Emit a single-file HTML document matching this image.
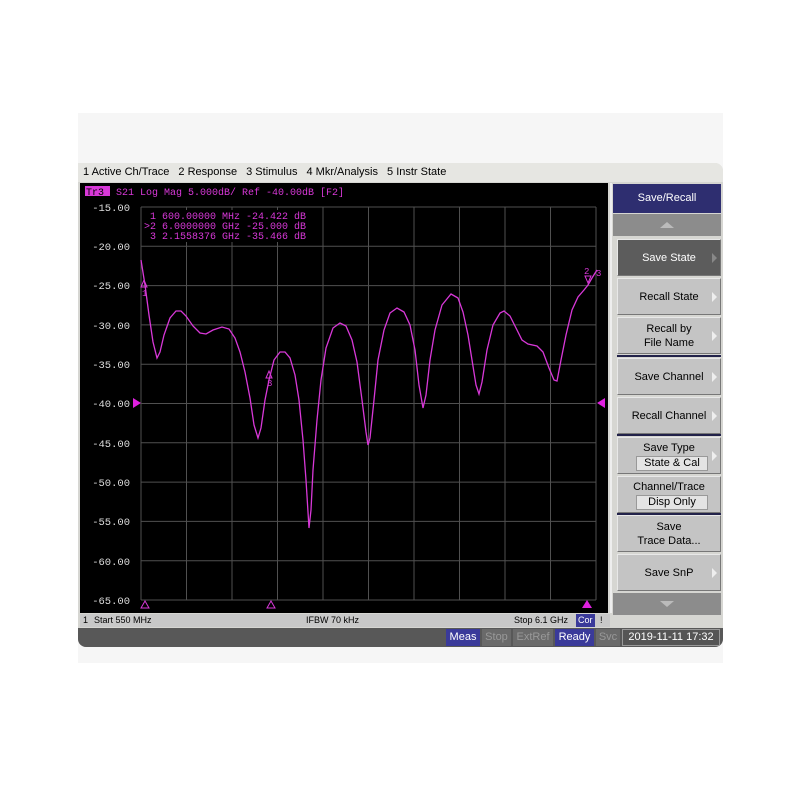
<!DOCTYPE html>
<html><head><style>
body{margin:0;width:800px;height:800px;background:#fff;position:relative;overflow:hidden;font-family:"Liberation Sans",sans-serif}
.bg{position:absolute;left:78px;top:113px;width:645px;height:550px;background:#f6f6f6}
.frame{position:absolute;left:78px;top:163px;width:645px;height:484px;background:#d6d6d2;border-radius:0 8px 8px 8px;overflow:hidden}
.menu{position:absolute;left:0;top:0;width:645px;height:19px;background:#e6e6e2;font-size:11px;line-height:19px;color:#000;padding-left:5px}
.menu span{margin-right:9px}
.btn{position:absolute;left:539px;width:104px;background:#c4c4c4;border:1px solid #e8e8e8;border-right-color:#777;border-bottom-color:#777;box-sizing:border-box;font-size:11px;color:#000;text-align:center;display:flex;flex-direction:column;justify-content:center;line-height:14px}
.arr{position:absolute;right:3px;top:50%;margin-top:-5px;width:0;height:0;border-left:5px solid #eee;border-top:5px solid transparent;border-bottom:5px solid transparent}
.sub{background:#e4e4e4;border:1px solid #999;margin:1px 12px 0 18px;line-height:13px}
.status{position:absolute;left:2px;top:451px;width:530px;height:13px;background:#c8c8c8;font-size:9px;line-height:13px}
.bot{position:absolute;left:0;top:465px;width:645px;height:19px;background:#585858;font-size:11px;line-height:17px}
.bot span{position:absolute;top:1px;height:17px;text-align:center}
</style></head><body>
<div class="bg"></div>
<div class="frame">
<div class="menu"><span>1 Active Ch/Trace</span><span>2 Response</span><span>3 Stimulus</span><span>4 Mkr/Analysis</span><span>5 Instr State</span></div>
<svg style="position:absolute;left:2px;top:20px" width="528" height="430" viewBox="80 183 528 430">
<rect x="80" y="183" width="528" height="430" fill="#000"/>
<g stroke="#505050" stroke-width="1">
<line x1="141" y1="207" x2="141" y2="600"/><line x1="186.5" y1="207" x2="186.5" y2="600"/><line x1="232" y1="207" x2="232" y2="600"/><line x1="277.5" y1="207" x2="277.5" y2="600"/><line x1="323" y1="207" x2="323" y2="600"/><line x1="368.5" y1="207" x2="368.5" y2="600"/><line x1="414" y1="207" x2="414" y2="600"/><line x1="459.5" y1="207" x2="459.5" y2="600"/><line x1="505" y1="207" x2="505" y2="600"/><line x1="550.5" y1="207" x2="550.5" y2="600"/><line x1="596" y1="207" x2="596" y2="600"/>
<line x1="141" y1="207" x2="596" y2="207"/><line x1="141" y1="246.3" x2="596" y2="246.3"/><line x1="141" y1="285.6" x2="596" y2="285.6"/><line x1="141" y1="324.9" x2="596" y2="324.9"/><line x1="141" y1="364.2" x2="596" y2="364.2"/><line x1="141" y1="403.5" x2="596" y2="403.5"/><line x1="141" y1="442.8" x2="596" y2="442.8"/><line x1="141" y1="482.1" x2="596" y2="482.1"/><line x1="141" y1="521.4" x2="596" y2="521.4"/><line x1="141" y1="560.7" x2="596" y2="560.7"/><line x1="141" y1="600" x2="596" y2="600"/>
</g>
<rect x="145" y="210" width="172" height="32" fill="#000"/>
<g font-family="Liberation Mono,monospace" font-size="10" fill="#d838d8">
<rect x="85" y="186" width="25" height="10" fill="#d838d8"/>
<text x="86" y="195" fill="#000">Tr3</text>
<text x="116" y="195">S21 Log Mag 5.000dB/ Ref -40.00dB [F2]</text>
<text x="150" y="219">1  600.00000 MHz -24.422 dB</text>
<text x="144" y="229">&gt;2  6.0000000 GHz -25.000 dB</text>
<text x="150" y="239">3  2.1558376 GHz -35.466 dB</text>
</g>
<g font-family="Liberation Mono,monospace" font-size="10.5" fill="#ddd" text-anchor="end">
<text x="130" y="211">-15.00</text><text x="130" y="250">-20.00</text><text x="130" y="289">-25.00</text><text x="130" y="329">-30.00</text><text x="130" y="368">-35.00</text><text x="130" y="407">-40.00</text><text x="130" y="447">-45.00</text><text x="130" y="486">-50.00</text><text x="130" y="525">-55.00</text><text x="130" y="565">-60.00</text><text x="130" y="604">-65.00</text>
</g>
<polyline fill="none" stroke="#d838d8" stroke-width="1.3" points="141,260 145,285 149,315 153,342 157,358 160,352 164,335 170,318 176,311 181,311 186,316 193,326 200,333 206,334 213,330 222,327 229,329 235,338 240,352 245,372 250,398 254,425 258,438 261,428 265,400 269,380 274,360 280,352 285,352 290,358 295,375 299,400 303,440 306,480 309,528 311,510 313,470 317,420 321,380 326,348 333,328 340,323 346,326 352,340 357,362 362,400 366,432 368,445 370,438 374,400 378,360 384,330 390,313 397,308 404,312 410,325 415,350 419,385 423,408 426,395 430,360 435,330 442,305 451,294 458,298 463,312 468,335 472,360 476,385 479,394 482,382 487,350 493,325 500,313 504,311 510,316 516,328 522,340 528,344 537,346 543,352 549,368 554,380 557,381 561,360 566,335 572,310 578,297 584,290 588,285 592,278 597,270"/>
<g fill="none" stroke="#d838d8" stroke-width="1"><path d="M141,287 l3,-7 l3,7 z"/><path d="M266,378 l3,-7 l3,7 z"/><path d="M585,276 l3,7 l3,-7 z"/><path d="M141,608 l4,-7 l4,7 z"/><path d="M267,608 l4,-7 l4,7 z"/></g>
<path d="M582,608 l5,-8 l5,8 z" fill="#e020e0"/>
<g font-family="Liberation Mono,monospace" font-size="9" fill="#d838d8"><text x="142" y="296">1</text><text x="267" y="386">3</text><text x="584" y="274">2</text><text x="596" y="276">3</text></g>
<path d="M133,398 l8,5 l-8,5 z" fill="#e020e0"/><path d="M605,398 l-8,5 l8,5 z" fill="#e020e0"/>
</svg>
<div style="position:absolute;left:532px;top:20px;width:2px;height:430px;background:#eee"></div>
<div style="position:absolute;left:535px;top:21px;width:108px;height:29px;background:#2e2e70;color:#fff;font-size:11px;text-align:center;line-height:29px">Save/Recall</div>
<div style="position:absolute;left:535px;top:51px;width:108px;height:22px;background:#8c8c8c"><div style="margin:8px auto 0;width:0;height:0;border-bottom:6px solid #bbb;border-left:7px solid transparent;border-right:7px solid transparent"></div></div>
<div class="btn" style="top:76px;height:37px;background:#5c5c5c;color:#fff">Save State<div class="arr" style="border-left-color:#888"></div></div>
<div class="btn" style="top:115px;height:37px">Recall State<div class="arr"></div></div>
<div class="btn" style="top:154px;height:37px">Recall by<br>File Name<div class="arr"></div></div>
<div style="position:absolute;left:539px;top:192px;width:104px;height:2px;background:#22224a"></div>
<div class="btn" style="top:195px;height:37px">Save Channel<div class="arr"></div></div>
<div class="btn" style="top:234px;height:37px">Recall Channel<div class="arr"></div></div>
<div style="position:absolute;left:539px;top:271px;width:104px;height:2px;background:#22224a"></div>
<div class="btn" style="top:274px;height:37px">Save Type<div class="sub">State &amp; Cal</div><div class="arr"></div></div>
<div class="btn" style="top:313px;height:37px">Channel/Trace<div class="sub">Disp Only</div></div>
<div style="position:absolute;left:539px;top:350px;width:104px;height:2px;background:#22224a"></div>
<div class="btn" style="top:352px;height:37px">Save<br>Trace Data...</div>
<div class="btn" style="top:391px;height:37px">Save SnP<div class="arr"></div></div>
<div style="position:absolute;left:535px;top:430px;width:108px;height:22px;background:#8c8c8c"><div style="margin:8px auto 0;width:0;height:0;border-top:6px solid #bbb;border-left:7px solid transparent;border-right:7px solid transparent"></div></div>
<div class="status"><span style="position:absolute;left:3px">1</span><span style="position:absolute;left:14px">Start 550 MHz</span><span style="position:absolute;left:226px">IFBW 70 kHz</span><span style="position:absolute;left:434px">Stop 6.1 GHz</span><span style="position:absolute;left:496px;background:#3a3a9a;color:#fff;padding:0 2px">Cor</span><span style="position:absolute;left:520px">!</span></div>
<div class="bot">
<span style="left:368px;width:34px;background:#3a3a9a;color:#fff">Meas</span>
<span style="left:404px;width:29px;background:#6a6a6a;color:#999">Stop</span>
<span style="left:435px;width:40px;background:#6a6a6a;color:#999">ExtRef</span>
<span style="left:477px;width:39px;background:#3a3a9a;color:#fff">Ready</span>
<span style="left:518px;width:24px;background:#6a6a6a;color:#999">Svc</span>
<span style="left:544px;width:98px;background:#555;color:#fff;border:1px solid #999;box-sizing:border-box;line-height:15px">2019-11-11 17:32</span>
</div>
</div>
</body></html>
